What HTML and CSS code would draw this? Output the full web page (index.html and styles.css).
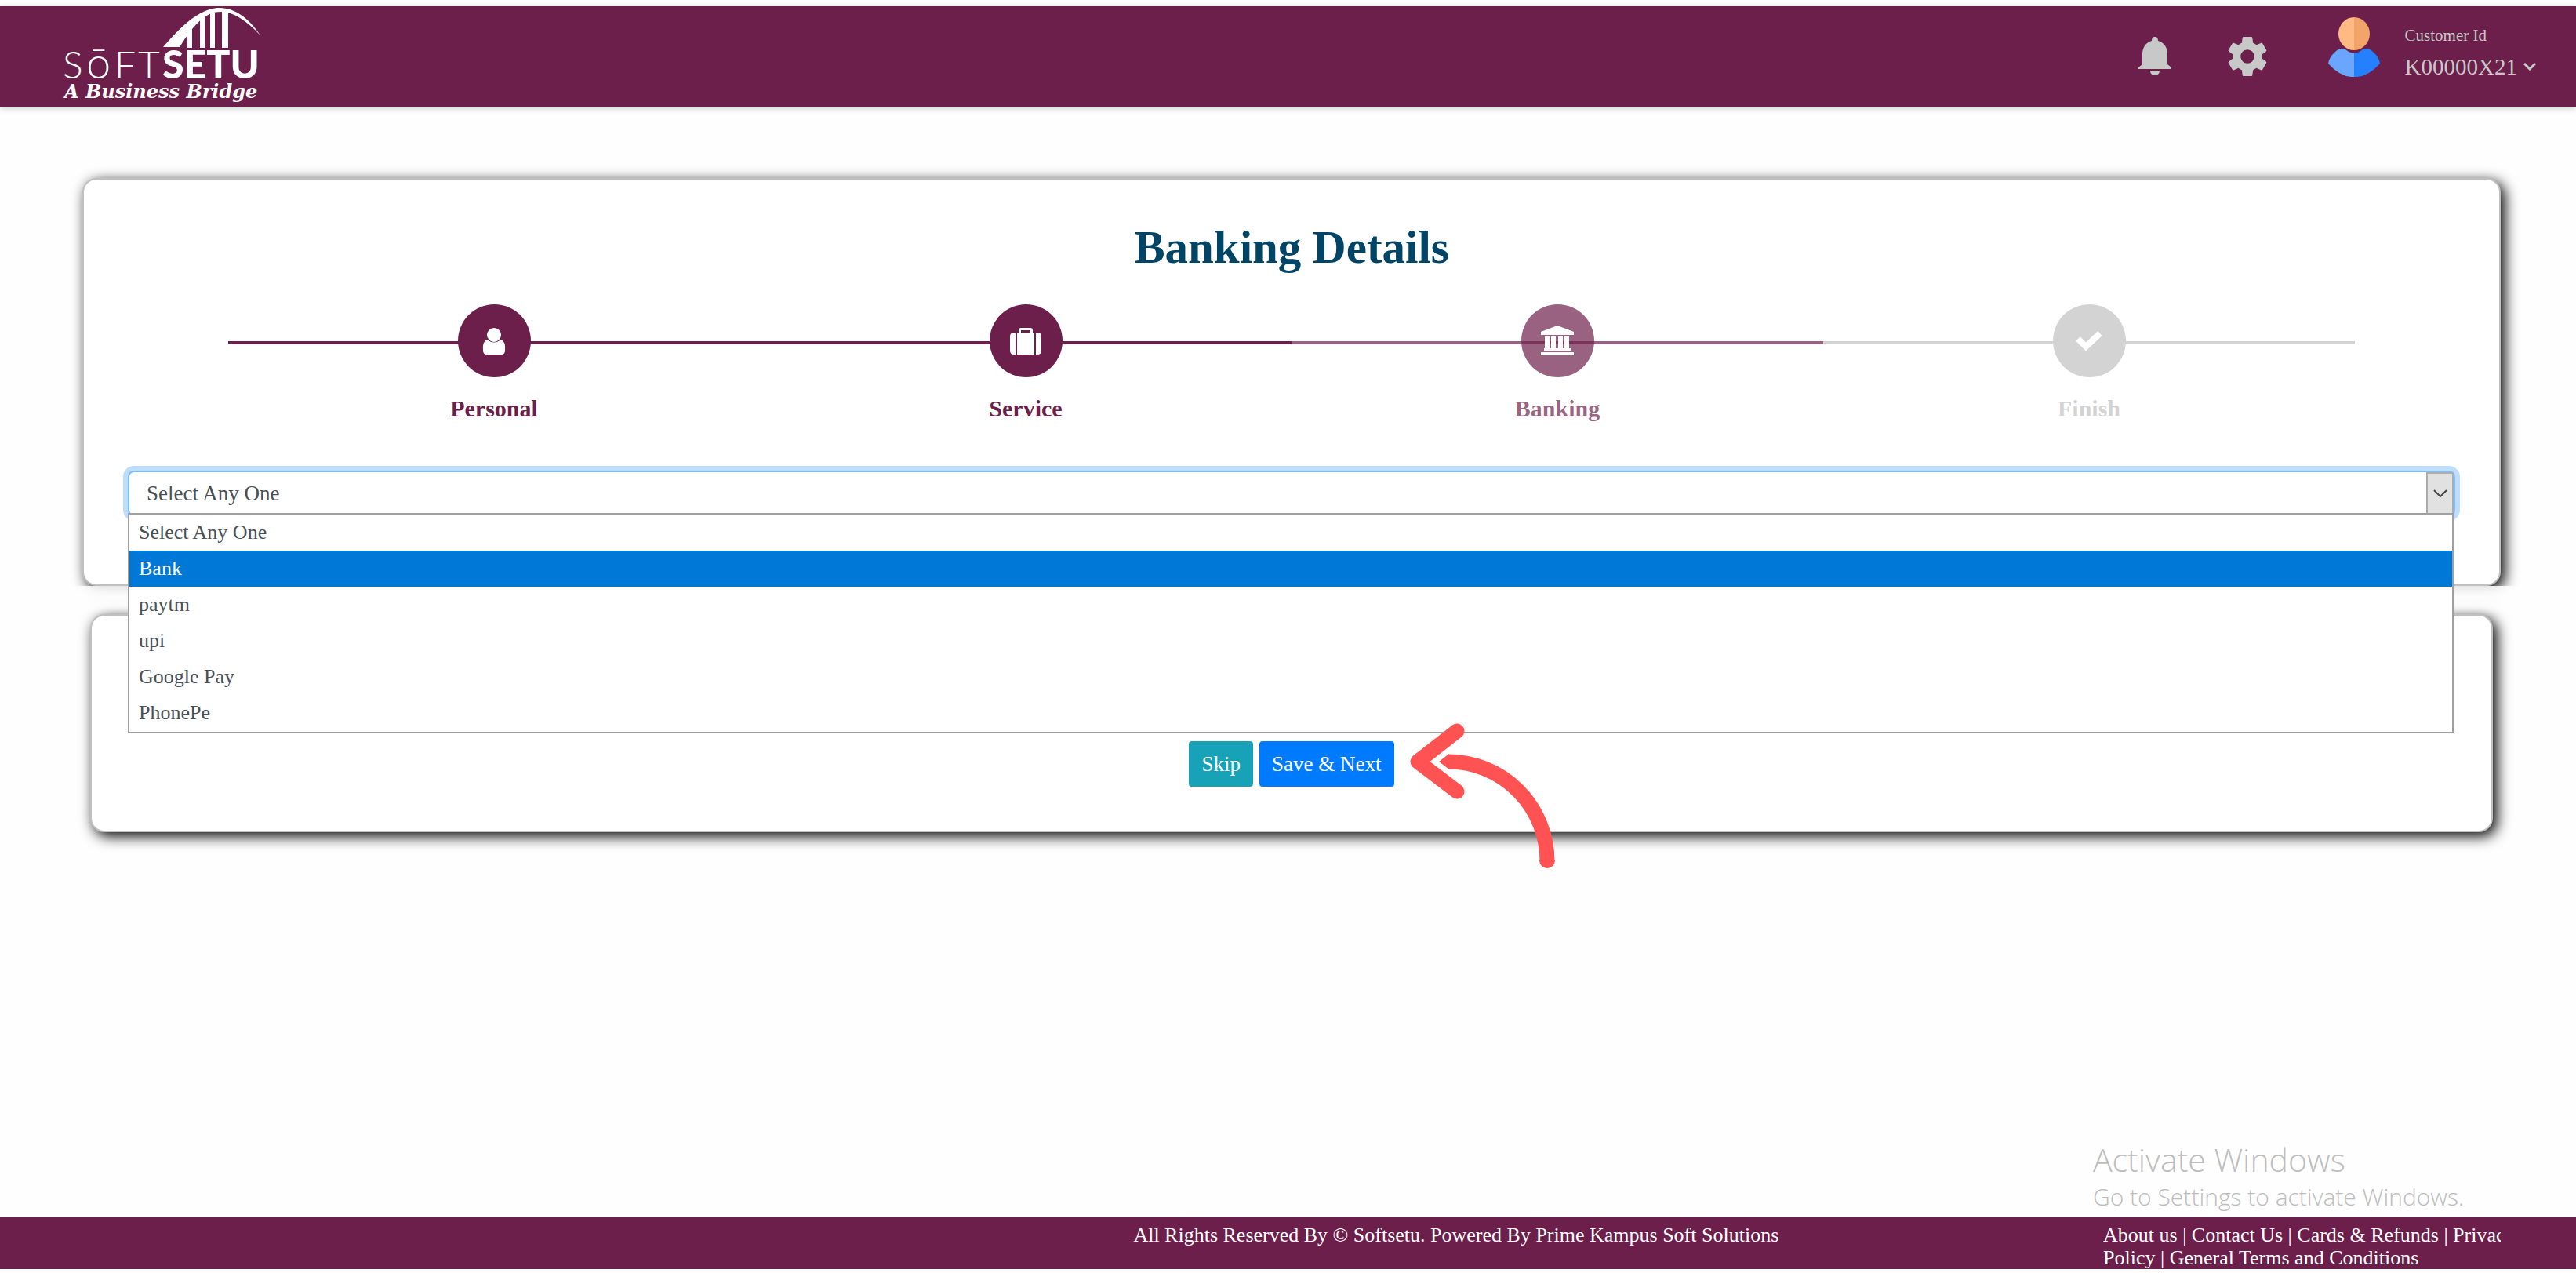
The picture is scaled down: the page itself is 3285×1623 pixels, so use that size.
FILE: index.html
```html
<!DOCTYPE html>
<html lang="en">
<head>
<meta charset="utf-8">
<title>Banking Details</title>
<link rel="stylesheet" href="styles.css">
</head>
<body>
<header class="topbar">
  <a class="logo" href="#" aria-label="Softsetu, A Business Bridge">
    <svg width="264" height="128" viewBox="76 8 264 128">
      <g fill="#fff">
        <path d="M208 60C240 22 262 10 280 10C300 10 318 24 332 45C314 26 298 15 281 15C261 15 246 33 229 60Z"/>
        <path d="M239 42L245 34V61H239ZM255 25L261 20V61H255ZM268 16H274V61H268ZM283 14H291V61H283Z"/>
      </g>
      <g class="logo-light">
        <text x="80" y="100">S</text>
        <text x="110" y="100" class="logo-o">ō</text>
        <text x="146" y="100">F</text>
        <text x="176" y="100">T</text>
      </g>
      <text class="logo-bold" x="207" y="100">SETU</text>
      <text class="logo-tag" x="82" y="125">A Business Bridge</text>
    </svg>
  </a>
  <nav class="tools">
    <button class="icon-btn" type="button" aria-label="Notifications">
      <svg width="42" height="50" viewBox="0 0 42 50" fill="currentColor"><path d="M21 0C24 0 25 2 25 5C33 7 37 14 37 22V35L42 39V41H0V39L5 35V22C5 14 9 7 17 5C17 2 18 0 21 0ZM15 43H27C27 47 24 49 21 49S15 47 15 43Z"/></svg>
    </button>
    <button class="icon-btn" type="button" aria-label="Settings">
      <svg width="50" height="50" viewBox="2 2 20 20" fill="currentColor"><path d="M12 15.500A3.500 3.500 0 0 1 8.500 12 3.500 3.500 0 0 1 12 8.500a3.500 3.500 0 0 1 3.500 3.500 3.500 3.500 0 0 1-3.500 3.500m7.430-2.530c.04-.32.07-.64.07-.97s-.03-.66-.07-1l2.110-1.630c.19-.15.24-.42.12-.64l-2-3.460c-.12-.22-.39-.31-.61-.22l-2.490 1c-.52-.39-1.060-.73-1.690-.98l-.37-2.650A.506.506 0 0 0 14 2h-4c-.25 0-.46.18-.5.42l-.37 2.650c-.63.25-1.170.59-1.690.98l-2.490-1c-.22-.09-.49 0-.61.22l-2 3.460c-.13.22-.07.49.12.64L4.570 11c-.04.34-.07.67-.07 1s.03.65.07.97l-2.110 1.660c-.19.15-.25.42-.12.64l2 3.460c.12.22.39.3.61.22l2.490-1.010c.52.4 1.060.74 1.690.99l.37 2.650c.04.24.25.42.5.42h4c.25 0 .46-.18.5-.42l.37-2.650c.63-.26 1.170-.59 1.690-.99l2.490 1.010c.22.08.49 0 .61-.22l2-3.460c.12-.22.07-.49-.12-.64z"/></svg>
    </button>
    <button class="account" type="button">
      <svg width="66" height="76" viewBox="0 0 66 76">
        <path fill="#ffb983" d="M33 0A20 21 0 0 0 33 42Z"/>
        <path fill="#f2a56b" d="M33 0A20 21 0 0 1 33 42Z"/>
        <path fill="#6aa6ff" d="M33 46Q26 45 22 41Q15 38 9 44Q1 51 0 59Q16 77 33 76Z"/>
        <path fill="#2480ff" d="M33 46Q40 45 44 41Q51 38 57 44Q65 51 66 59Q50 77 33 76Z"/>
      </svg>
      <span class="account-text">
        <span class="account-label">Customer Id</span>
        <span class="account-id">K00000X21
          <svg width="16" height="10" viewBox="0 0 16 10" fill="none" stroke="currentColor" stroke-width="3"><path d="M1 1L8 8L15 1"/></svg>
        </span>
      </span>
    </button>
  </nav>
</header>

<main class="page">
  <section class="card card-steps">
    <h1>Banking Details</h1>
    <ol class="steps">
      <li class="done">
        <span class="dot"><svg width="30" height="36" viewBox="0 0 30 36" fill="#fff"><circle cx="15" cy="10" r="9"/><path d="M6 16Q0 18 1 30Q1 35 6 35H24Q29 35 29 30Q30 18 24 16Q15 23 6 16Z"/></svg></span>
        Personal
      </li>
      <li class="done">
        <span class="dot"><svg width="40" height="34" viewBox="0 0 40 34"><path fill="#fff" fill-rule="evenodd" d="M7 6V34H5Q0 34 0 29V11Q0 6 5 6ZM9 6H11V3Q11 0 14 0H26Q29 0 29 3V6H31V34H9ZM14 3V6H26V3ZM33 6H35Q40 6 40 11V29Q40 34 35 34H33Z"/></svg></span>
        Service
      </li>
      <li class="current" aria-current="step">
        <span class="dot"><svg width="44" height="40" viewBox="0 0 44 40" fill="#fff"><path d="M22 0L43 8V12H1V8ZM6 14H12V29H6ZM14 14H20V29H14ZM23 14H29V29H23ZM31 14H37V29H31ZM5 29H39V32H5ZM1 34H43V38H1Z"/></svg></span>
        Banking
      </li>
      <li>
        <span class="dot"><svg width="36" height="28" viewBox="0 0 36 28" fill="none" stroke="#fff" stroke-width="8"><path d="M4 11L14 21L32 4"/></svg></span>
        Finish
      </li>
    </ol>
    <div class="field">
      <select class="method" aria-label="Payment method">
        <option>Select Any One</option>
        <option>Bank</option>
        <option>paytm</option>
        <option>upi</option>
        <option>Google Pay</option>
        <option>PhonePe</option>
      </select>
      <span class="method-arrow"><svg width="18" height="10" viewBox="0 0 18 10" fill="none" stroke="#444" stroke-width="2"><path d="M1 1L9 9L17 1"/></svg></span>
      <ul class="menu" role="listbox" aria-label="Payment method">
        <li role="option">Select Any One</li>
        <li role="option" class="active" aria-selected="true">Bank</li>
        <li role="option">paytm</li>
        <li role="option">upi</li>
        <li role="option">Google Pay</li>
        <li role="option">PhonePe</li>
      </ul>
    </div>
  </section>

  <section class="card card-actions">
    <div class="actions">
      <button class="btn btn-skip" type="button">Skip</button>
      <button class="btn btn-save" type="button">Save &amp; Next</button>
      <svg class="pointer" width="186" height="190" viewBox="1796 920 186 190" fill="none" stroke="#ff5252" stroke-width="19">
        <path stroke-linecap="round" stroke-linejoin="round" d="M1857 932L1807 971L1857 1009"/>
        <path d="M1846 971A126 127 0 0 1 1972 1098"/>
        <path stroke="none" fill="#ff5252" d="M1834 971L1847 961V981ZM1962 1097H1982A10 10 0 0 1 1962 1097Z"/>
      </svg>
    </div>
  </section>
</main>

<aside class="notice">
  <p class="notice-title">Activate Windows</p>
  <p class="notice-text">Go to Settings to activate Windows.</p>
</aside>

<footer class="footer">
  <p class="copyright">All Rights Reserved By © Softsetu. Powered By Prime Kampus Soft Solutions</p>
  <p class="links"><a href="#">About us</a> | <a href="#">Contact Us</a> | <a href="#">Cards &amp; Refunds</a> | <a href="#">Privacy</a><br><a href="#">Policy</a> | <a href="#">General Terms and Conditions</a></p>
</footer>
</body>
</html>
```
FILE: styles.css
```css
* {
  box-sizing: border-box;
}

body {
  --brand: #6d1f4b;
  margin: 0;
  padding: 8px 0 5px;
  min-height: 100vh;
  display: flex;
  flex-direction: column;
  background: #fefefe;
  color: #495057;
  font-family: "Liberation Serif", "Times New Roman", serif;
  font-size: 26px;
}

button {
  font: inherit;
  border: 0;
  padding: 0;
  background: none;
}

svg {
  display: block;
}

a {
  color: inherit;
  text-decoration: none;
}

/* Top bar */
.topbar {
  display: flex;
  justify-content: space-between;
  height: 128px;
  padding: 0 51px 0 76px;
  background: var(--brand);
  box-shadow: 0 2px 8px rgba(0, 0, 0, 0.2);
}

.logo text {
  fill: #fff;
  font-family: Lato, sans-serif;
  font-size: 48px;
}

.logo .logo-light text {
  font-weight: 300;
}

.logo .logo-light .logo-o {
  font-size: 56px;
}

.logo .logo-bold {
  font-size: 50px;
  font-weight: 900;
}

.logo .logo-tag {
  font-family: "DejaVu Serif", serif;
  font-size: 24px;
  font-style: italic;
  font-weight: bold;
}

.tools {
  display: flex;
  align-items: flex-start;
  color: #c8c8c8;
}

.icon-btn {
  margin: 39px 72px 0 0;
  color: inherit;
}

.account {
  display: flex;
  gap: 32px;
  margin-top: 14px;
  margin-left: 6px;
  color: inherit;
  text-align: left;
}

.account-text {
  display: flex;
  flex-direction: column;
}

.account-label {
  margin-top: 11px;
  font-size: 21px;
  line-height: 24px;
}

.account-id {
  display: flex;
  align-items: center;
  gap: 8px;
  margin-top: 12px;
  font-size: 29px;
  line-height: 32px;
}

/* Cards */
.page {
  padding: 91px 96px 0 105px;
}

.card {
  border: 2px solid #c0c0c0;
  border-radius: 18px;
  background: #fff;
  box-shadow: 5px 5px 18px #000;
}

.card-steps {
  padding: 50px 56px 0;
  height: 520px;
  position: relative;
  z-index: 1;
}

/* Fades the first card's shadow out below its lower edge */
.card-steps::after {
  content: "";
  position: absolute;
  top: 100%;
  left: -40px;
  right: -40px;
  margin-top: 2px;
  height: 34px;
  background: linear-gradient(rgba(254, 254, 254, 0.86), rgba(254, 254, 254, 0.96) 16px, rgba(254, 254, 254, 0) 34px);
}

.card-steps h1 {
  margin: 0;
  color: #004466;
  font-size: 59px;
  line-height: 72px;
  text-align: center;
}

.steps {
  display: flex;
  margin: 37px 0 0;
  padding: 0 128px;
  list-style: none;
}

.steps li {
  --step: #d3d3d3;
  position: relative;
  z-index: 0;
  flex: 1;
  display: flex;
  flex-direction: column;
  align-items: center;
  gap: 24px;
  color: var(--step);
  font-size: 30px;
  font-weight: bold;
  line-height: 32px;
}

.steps li::after {
  content: "";
  position: absolute;
  z-index: -1;
  top: 47px;
  left: 0;
  width: 100%;
  height: 4px;
  background: var(--step);
}

.steps .done {
  --step: #6d1f4b;
}

.steps .current {
  --step: rgba(109, 31, 75, 0.7);
}

.dot {
  display: flex;
  align-items: center;
  justify-content: center;
  width: 93px;
  height: 93px;
  border-radius: 50%;
  background: var(--step);
}

.field {
  position: relative;
  z-index: 1;
  margin-top: 63px;
}

.method {
  display: block;
  appearance: none;
  width: 100%;
  height: 58px;
  padding: 0 22px;
  border: 2px solid #80bdff;
  border-radius: 8px;
  outline: 0;
  background: #fff;
  box-shadow: 0 0 0 6px #bfdeff;
  color: #495057;
  font: 27px "Liberation Serif", "Times New Roman", serif;
}

.method-arrow {
  position: absolute;
  top: 2px;
  right: 2px;
  display: flex;
  align-items: center;
  justify-content: center;
  width: 35px;
  height: 54px;
  border: 2px solid #adadad;
  background: #e1e1e1;
}

.menu {
  position: absolute;
  top: 54px;
  left: 0;
  right: 2px;
  margin: 0;
  padding: 0 0 1px;
  border: 2px solid #a0a0a0;
  background: #fff;
  list-style: none;
}

.menu li {
  padding: 0 12px;
  line-height: 46px;
}

.menu .active {
  background: #0078d7;
  color: #fff;
}

.card-actions {
  margin: 36px 10px 0;
  padding: 160px 0 56px;
}

.actions {
  position: relative;
  z-index: 2;
  display: flex;
  gap: 8px;
  width: fit-content;
  margin: 0 auto;
}

.btn {
  height: 58px;
  padding: 0 16px;
  border-radius: 4px;
  color: #fff;
  font-size: 27px;
}

.btn-skip {
  background: #17a2b8;
}

.btn-save {
  background: #007bff;
}

.pointer {
  position: absolute;
  left: calc(100% + 19px);
  top: -25px;
}

/* System notice above the footer */
.notice {
  width: 616px;
  margin: auto 0 0 auto;
  padding-bottom: 4px;
  color: #bdbdbd;
  font-family: "Open Sans", sans-serif;
}

.notice p {
  margin: 0;
}

.notice-title {
  font-size: 41px;
  font-weight: 300;
  line-height: 52px;
}

.notice-text {
  font-size: 30px;
  font-weight: 300;
  line-height: 44px;
}

/* Footer */
.footer {
  display: flex;
  justify-content: space-between;
  height: 66px;
  padding: 8px 96px 0 44%;
  overflow: hidden;
  background: var(--brand);
  color: #fff;
  line-height: 29px;
}

.footer p {
  margin: 0;
}

.links {
  width: 507px;
  overflow: hidden;
  white-space: nowrap;
}
```
